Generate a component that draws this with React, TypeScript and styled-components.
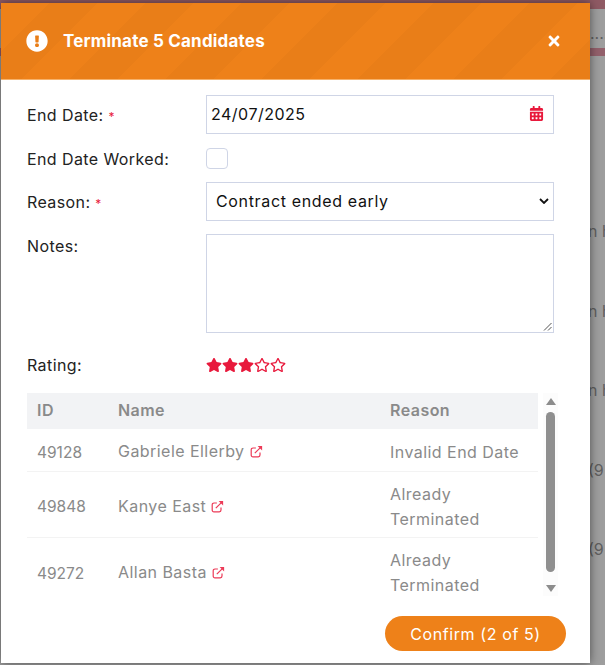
import styled, { createGlobalStyle } from 'styled-components'
import { FaCalendarAlt, FaExclamationCircle, FaRegStar, FaStar, FaTimes } from 'react-icons/fa'

const candidates = [
  { id: 49128, name: 'Gabriele Ellerby', reason: 'Invalid End Date' },
  { id: 49848, name: 'Kanye East', reason: 'Already Terminated' },
  { id: 49272, name: 'Allan Basta', reason: 'Already Terminated' },
]

function LinkIcon() {
  return (
    <svg width="13" height="13" viewBox="0 0 13 13" fill="none" stroke="currentColor" strokeWidth="1.2">
      <path d="M10 7.5v2.6a1.7 1.7 0 0 1-1.7 1.7H2.9a1.7 1.7 0 0 1-1.7-1.7V4.7A1.7 1.7 0 0 1 2.9 3h3" />
      <path d="M4.8 8.2 11.4 1.6" />
      <path d="M7.6 0.9h4.5v4.5z" fill="currentColor" stroke="none" />
    </svg>
  )
}

export default function App() {
  return (
    <>
      <GlobalStyle />
      <Page>
        <TopBand />
        <SecondBand />
        <PageText $top={33} $left={590}>....</PageText>
        <PageText $top={231} $left={588}>n h</PageText>
        <PageText $top={311} $left={588}>n h</PageText>
        <PageText $top={390} $left={588}>n h</PageText>
        <PageText $top={470} $left={588}>(9</PageText>
        <PageText $top={549} $left={588}>(9</PageText>
        <Modal>
          <Header>
            <Title>
              <FaExclamationCircle size={22} />
              Terminate 5 Candidates
            </Title>
            <FaTimes size={16} />
          </Header>
          <Body>
            <Form>
              <Label>
                End Date: <Required>*</Required>
              </Label>
              <DateField>
                24/07/2025
                <FaCalendarAlt size={15} />
              </DateField>
              <Label>End Date Worked:</Label>
              <Checkbox />
              <Label>
                Reason: <Required>*</Required>
              </Label>
              <SelectField>
                Contract ended early
                <svg width="10" height="6" viewBox="0 0 10 6" fill="none" stroke="#111" strokeWidth="1.8">
                  <path d="M1 1l4 4 4-4" />
                </svg>
              </SelectField>
              <NotesLabel>Notes:</NotesLabel>
              <Notes>
                <svg width="9" height="9" viewBox="0 0 9 9" stroke="#555" strokeWidth="1">
                  <path d="M1 8.5 8.5 1M5 8.5 8.5 5" />
                </svg>
              </Notes>
              <RatingLabel>Rating:</RatingLabel>
              <Stars>
                <FaStar />
                <FaStar />
                <FaStar />
                <FaRegStar />
                <FaRegStar />
              </Stars>
            </Form>
            <TableArea>
              <TableClip>
                <Table>
                  <thead>
                    <tr>
                      <HeadCell>ID</HeadCell>
                      <HeadCell>Name</HeadCell>
                      <HeadCell>Reason</HeadCell>
                    </tr>
                  </thead>
                  <tbody>
                    {candidates.map((c) => (
                      <tr key={c.id}>
                        <IdCell>{c.id}</IdCell>
                        <Cell>
                          {c.name}
                          <LinkMark>
                            <LinkIcon />
                          </LinkMark>
                        </Cell>
                        <Cell>{c.reason}</Cell>
                      </tr>
                    ))}
                  </tbody>
                </Table>
              </TableClip>
              <Scrollbar>
                <ArrowUp />
                <Thumb />
                <ArrowDown />
              </Scrollbar>
            </TableArea>
            <Footer>
              <ConfirmButton>Confirm (2 of 5)</ConfirmButton>
            </Footer>
          </Body>
        </Modal>
      </Page>
    </>
  )
}

const GlobalStyle = createGlobalStyle`
  html, body {
    margin: 0;
    padding: 0;
  }
  body {
    font-family: 'Inter', 'Open Sans', sans-serif;
  }
`

const Page = styled.div`
  position: relative;
  width: 605px;
  height: 665px;
  overflow: hidden;
  background: #9e9e9e;
`

const TopBand = styled.div`
  height: 9px;
  background: #8f5a64;
`

const SecondBand = styled.div`
  height: 8px;
  margin-top: 39px;
  background: #93606b;
`

const PageText = styled.div<{ $top: number; $left: number }>`
  position: absolute;
  top: ${(p) => p.$top - 9}px;
  left: ${(p) => p.$left}px;
  font-size: 16px;
  line-height: 18px;
  color: #5f5f5f;
  white-space: nowrap;
`

const Modal = styled.div`
  position: absolute;
  top: 3px;
  left: 1px;
  width: 589px;
  height: 660px;
  display: flex;
  flex-direction: column;
  background: #fff;
  box-shadow: 0 0 9px rgba(0, 0, 0, 0.5);
`

const Header = styled.div`
  height: 77px;
  flex: none;
  box-sizing: border-box;
  padding: 0 28px 1px 25px;
  display: flex;
  align-items: center;
  justify-content: space-between;
  color: #fff;
  border-bottom: 1px solid #f6b26b;
  background: repeating-linear-gradient(135deg, #ee8119 0 34px, #e97e18 34px 68px);
`

const Title = styled.div`
  display: flex;
  align-items: center;
  gap: 15px;
  font-size: 17px;
  font-weight: 700;
  letter-spacing: 0.2px;
`

const Body = styled.div`
  flex: 1;
  padding: 15px 0 0 26px;
  display: flex;
  flex-direction: column;
`

const Form = styled.div`
  display: grid;
  grid-template-columns: 179px 348px;
  align-items: center;
  row-gap: 13px;
`

const Label = styled.div`
  padding-top: 1px;
  font-size: 16px;
  letter-spacing: 0.4px;
  color: #222;
`

const Required = styled.span`
  color: #e8193c;
  font-size: 12px;
`

const DateField = styled.div`
  height: 39px;
  box-sizing: border-box;
  border: 1px solid #cfd5e6;
  padding: 0 9px 2px 4px;
  display: flex;
  align-items: center;
  justify-content: space-between;
  font-size: 16px;
  letter-spacing: 0.5px;
  color: #111;
  svg {
    color: #e8193c;
  }
`

const Checkbox = styled.div`
  width: 22px;
  height: 21px;
  margin-top: 1px;
  box-sizing: border-box;
  border: 1.5px solid #cfd5e6;
  border-radius: 4px;
`

const SelectField = styled(DateField)`
  padding: 0 4px 2px 9px;
  letter-spacing: 0.65px;
`

const NotesLabel = styled(Label)`
  align-self: start;
  padding-top: 2px;
`

const Notes = styled.div`
  height: 99px;
  box-sizing: border-box;
  border: 1px solid #cfd5e6;
  display: flex;
  align-items: flex-end;
  justify-content: flex-end;
  padding: 1px;
`

const RatingLabel = styled(Label)`
  margin-top: 8px;
`

const Stars = styled.div`
  margin-top: 8px;
  display: flex;
  color: #e8193c;
  font-size: 16px;
  svg {
    display: block;
  }
`

const TableArea = styled.div`
  margin-top: 18px;
  display: flex;
  gap: 5px;
  height: 203px;
`

const TableClip = styled.div`
  width: 511px;
  overflow: hidden;
`

const Table = styled.table`
  width: 100%;
  border-collapse: collapse;
  table-layout: fixed;
  font-size: 16px;
  letter-spacing: 0.45px;
  color: #8a8a8a;
`

const HeadCell = styled.th`
  height: 36px;
  padding: 0 10px 2px;
  box-sizing: border-box;
  text-align: left;
  font-weight: 600;
  background: #f2f3f5;
  &:nth-child(1) {
    width: 81px;
  }
  &:nth-child(3) {
    width: 158px;
  }
`

const Cell = styled.td`
  padding: 10px 10px 5.5px;
  line-height: 25px;
  border-bottom: 1px solid #f3f3f3;
`

const IdCell = styled(Cell)`
  font-size: 15.5px;
  letter-spacing: 0;
`

const LinkMark = styled.span`
  display: inline-block;
  margin-left: 5px;
  color: #ec3a57;
  vertical-align: -1px;
`

const Scrollbar = styled.div`
  width: 15px;
  background: #fcfcfc;
  display: flex;
  flex-direction: column;
  align-items: center;
  padding-top: 5px;
`

const ArrowUp = styled.div`
  width: 0;
  height: 0;
  border-left: 5px solid transparent;
  border-right: 5px solid transparent;
  border-bottom: 7px solid #8c8c8c;
`

const ArrowDown = styled.div`
  width: 0;
  height: 0;
  margin-top: 13px;
  border-left: 5px solid transparent;
  border-right: 5px solid transparent;
  border-top: 7px solid #8c8c8c;
`

const Thumb = styled.div`
  width: 9px;
  height: 160px;
  margin-top: 7px;
  border-radius: 5px;
  background: #8f8f8f;
`

const Footer = styled.div`
  display: flex;
  justify-content: flex-end;
  padding: 20px 24px 0 0;
`

const ConfirmButton = styled.button`
  width: 181px;
  height: 35px;
  border: 0;
  border-radius: 18px;
  background: #ee8119;
  color: #fff;
  font-family: inherit;
  font-size: 16px;
  letter-spacing: 0.6px;
`
